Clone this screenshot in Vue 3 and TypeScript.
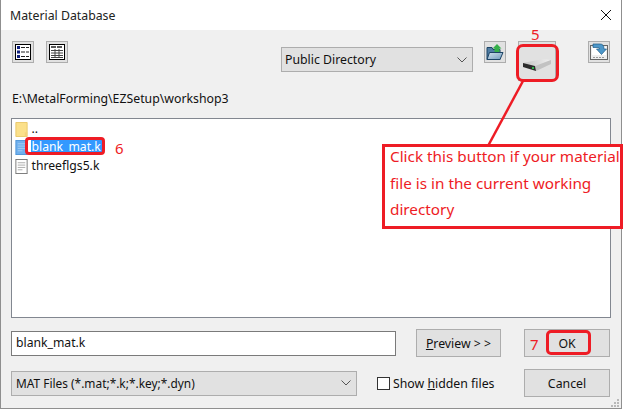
<template>
  <div class="dialog">
    <div class="titlebar">
      <span class="title">Material Database</span>
      <svg class="close" width="12" height="12" viewBox="0 0 12 12">
        <path d="M1 1 L11 11 M11 1 L1 11" stroke="#111" stroke-width="1" fill="none" />
      </svg>
    </div>

    <div class="body">
      <div class="toolbar">
        <div class="tool-btn">
          <svg width="16" height="16" viewBox="0 0 16 16">
            <rect x="0.500" y="0.500" width="15" height="15" fill="#fff" stroke="#000" />
            <rect x="2" y="2" width="3" height="3" fill="#10207e" />
            <rect x="2" y="6.500" width="3" height="3" fill="#10207e" />
            <rect x="2" y="11" width="3" height="3" fill="#10207e" />
            <path d="M6 3.500h8M6 8h8M6 12.500h8" stroke="#222" stroke-width="1" stroke-dasharray="4 1" />
          </svg>
        </div>
        <div class="tool-btn second">
          <svg width="16" height="16" viewBox="0 0 16 16">
            <rect x="0.500" y="0.500" width="15" height="15" fill="#fff" stroke="#000" />
            <path d="M2 3h12" stroke="#222" stroke-width="1.500" stroke-dasharray="5 1" />
            <path d="M2 6.500h12M2 9h12M2 11.500h12M2 13.500h12M6 5v9M10 5v9" stroke="#444" stroke-width="1" />
          </svg>
        </div>
        <div class="dir-select combo">
          <span>Public Directory</span>
          <svg class="chevron" width="10" height="6" viewBox="0 0 10 6">
            <path d="M0.500 0.500 L5 5 L9.500 0.500" stroke="#555" fill="none" />
          </svg>
        </div>
        <div class="tool-btn up-btn">
          <svg width="18" height="16" viewBox="0 0 18 16">
            <defs>
              <linearGradient id="folderFront" x1="0" y1="0" x2="1" y2="1">
                <stop offset="0" stop-color="#d5e3ee" />
                <stop offset="1" stop-color="#6f9abd" />
              </linearGradient>
            </defs>
            <path d="M1 3.500 H6 L7 5.500 H14 V15.500 H1 Z" fill="#4f7da3" stroke="#1d4466" />
            <path d="M3.500 8.500 H17 L14 15.500 H1 Z" fill="url(#folderFront)" stroke="#1d4466" />
            <path d="M11 0 L15.500 4.500 H13.500 V8 H8.500 V4.500 H6.500 Z" fill="#35b04a" />
          </svg>
        </div>
        <div class="drive-btn">
          <svg width="30" height="14" viewBox="0 0 30 14">
            <defs>
              <linearGradient id="driveTop" x1="0" y1="0" x2="1" y2="0">
                <stop offset="0" stop-color="#c4c4c4" />
                <stop offset="1" stop-color="#f0f0f0" />
              </linearGradient>
            </defs>
            <path d="M1 5 L21 1 L29 2 L13 8 Z" fill="url(#driveTop)" />
            <path d="M13 8 L29 2 L29 6 L14 13 Z" fill="#c2c2c2" />
            <path d="M1 5 L13 8 L14 13 L1 9 Z" fill="#2c2c2c" />
            <rect x="10" y="9" width="2" height="2" fill="#2fb64a" />
          </svg>
        </div>
        <div class="tool-btn save-btn">
          <svg width="18" height="18" viewBox="0 0 18 18">
            <rect x="0.500" y="2.500" width="17" height="14" fill="#eeeeee" stroke="#666" />
            <rect x="2" y="4" width="14" height="8" fill="#fff" />
            <path d="M3 14.500h12" stroke="#999" stroke-dasharray="2 1" />
            <path d="M3 1 H10 Q14 1 14 6 H16.500 L11.500 11.500 L6.500 6 H9.500 Q9.500 4.500 8 4.500 H3 Z" fill="#4d97c9" stroke="#1c5a85" stroke-width="0.700" />
          </svg>
        </div>
      </div>

      <div class="path">E:\MetalForming\EZSetup\workshop3</div>

      <div class="file-list">
        <div v-for="file in files" :key="file.name" class="file-row">
          <svg v-if="file.kind === 'folder'" class="file-icon" width="13" height="16" viewBox="0 0 13 16">
            <path d="M0.500 0.500 H12.500 V15.500 H0.500 Z" fill="#fbe08a" stroke="#e9c869" />
            <path d="M10 11 H12.500 V15.500 H10 Z" fill="#f4d27a" />
          </svg>
          <svg v-else class="file-icon" width="13" height="16" viewBox="0 0 13 16">
            <rect x="0.500" y="0.500" width="12" height="15" :fill="file.selected ? '#6fb0ee' : '#fff'" :stroke="file.selected ? '#4f95d8' : '#777'" />
            <path d="M2.500 4h8M2.500 6.500h8M2.500 9h8M2.500 11.500h5" :stroke="file.selected ? '#a5cdf2' : '#aaa'" />
          </svg>
          <span class="file-name" :class="{ selected: file.selected }">{{ file.name }}</span>
        </div>
      </div>

      <div class="row name-row">
        <div class="name-input">blank_mat.k</div>
        <div class="btn preview"><span><u>P</u>review &gt; &gt;</span></div>
        <div class="btn ok">OK</div>
      </div>

      <div class="row filter-row">
        <div class="filter-select combo">
          <span>MAT Files (*.mat;*.k;*.key;*.dyn)</span>
          <svg class="chevron" width="10" height="6" viewBox="0 0 10 6">
            <path d="M0.500 0.500 L5 5 L9.500 0.500" stroke="#555" fill="none" />
          </svg>
        </div>
        <label class="check">
          <span class="box"></span>
          <span>Show <u>h</u>idden files</span>
        </label>
        <div class="btn cancel">Cancel</div>
      </div>

      <svg class="grip" width="10" height="10" viewBox="0 0 10 10">
        <path d="M7 1h2v2h-2zM4 4h2v2h-2zM7 4h2v2h-2zM1 7h2v2h-2zM4 7h2v2h-2zM7 7h2v2h-2z" fill="#b9b9b9" />
      </svg>
    </div>

    <!-- red annotations lying over the dialog -->
    <div class="mark mark-drive"></div>
    <div class="mark mark-file"></div>
    <div class="mark mark-ok"></div>
    <span class="num num-5">5</span>
    <span class="num num-6">6</span>
    <span class="num num-7">7</span>
    <svg class="leader" width="50" height="70" viewBox="0 0 50 70">
      <path d="M37 1 L2 66" stroke="#ee1c25" stroke-width="2.500" fill="none" />
    </svg>
    <div class="callout">
      <div class="callout-text">Click this button if your material file is in the current working directory</div>
    </div>
  </div>
</template>

<script setup lang="ts">
interface FileItem {
  name: string
  kind: 'folder' | 'file'
  selected?: boolean
}

const files: FileItem[] = [
  { name: '..', kind: 'folder' },
  { name: 'blank_mat.k', kind: 'file', selected: true },
  { name: 'threeflgs5.k', kind: 'file' }
]
</script>

<style>
html, body {
  background: #fff;
  overflow: hidden;
}
</style>

<style scoped>
.dialog {
  position: relative;
  box-sizing: border-box;
  width: 622px;
  height: 409px;
  display: flex;
  flex-direction: column;
  border: 1px solid #8f8f8f;
  border-top: none;
  font-family: "Noto Sans", "Open Sans", sans-serif;
  font-size: 12.300px;
  color: #111;
}

.titlebar {
  height: 30px;
  flex: none;
  background: #fff;
  display: flex;
  align-items: center;
  justify-content: space-between;
  padding: 0 9px 0 9px;
}

.title {
  font-size: 12.300px;
  color: #222;
}

.body {
  position: relative;
  flex: 1;
  background: #f0f0f0;
  padding: 0 9px;
}

.toolbar {
  display: flex;
  align-items: flex-start;
  height: 58px;
  padding-top: 11px;
  box-sizing: border-box;
}

.tool-btn {
  width: 22px;
  height: 22px;
  box-sizing: border-box;
  border: 1px solid #adadad;
  background: #e1e1e1;
  display: flex;
  align-items: center;
  justify-content: center;
  flex: none;
  margin-left: 2px;
}

.tool-btn.second {
  margin-left: 12px;
}

.combo {
  box-sizing: border-box;
  border: 1px solid #adadad;
  background: #e1e1e1;
  display: flex;
  align-items: center;
  justify-content: space-between;
  padding: 0 4px 0 3px;
  flex: none;
}

.dir-select {
  width: 192px;
  height: 25px;
  margin: 6px 0 0 213px;
}

.chevron {
  margin-right: 1px;
}

.tool-btn.up-btn {
  margin-left: 11px;
}

.drive-btn {
  box-sizing: border-box;
  width: 38px;
  height: 40px;
  margin-left: 12px;
  border: 1px solid #adadad;
  background: #e1e1e1;
  display: flex;
  align-items: center;
  justify-content: center;
  flex: none;
  padding-top: 8px;
}

.tool-btn.save-btn {
  margin-left: 32px;
}

.path {
  height: 30px;
  line-height: 22px;
  margin-left: 2px;
}

.file-list {
  box-sizing: border-box;
  height: 200px;
  margin-left: 1px;
  width: 600px;
  background: #fff;
  border: 1px solid #828790;
  padding: 1px 2px;
}

.file-row {
  display: flex;
  align-items: center;
  height: 18.500px;
  gap: 3px;
  padding-left: 1px;
}

.file-icon {
  flex: none;
  height: 15px;
}

.file-name {
  padding: 0 1px;
  line-height: 15px;
  font-size: 12.200px;
  position: relative;
  top: -1px;
  left: -0.500px;
}

.file-name.selected {
  background: #3399ff;
  color: #fff;
}

.row {
  display: flex;
  align-items: center;
  margin-left: 1px;
}

.name-row {
  margin-top: 11px;
  height: 28px;
}

.name-input {
  box-sizing: border-box;
  width: 385px;
  height: 25px;
  background: #fff;
  border: 1px solid #7a7a7a;
  line-height: 22px;
  padding-left: 4px;
  font-size: 12.200px;
}

.btn {
  box-sizing: border-box;
  height: 28px;
  border: 1px solid #adadad;
  background: #e1e1e1;
  display: flex;
  align-items: center;
  justify-content: center;
  flex: none;
  font-size: 12.300px;
}

.preview {
  width: 85px;
  margin-left: 20px;
}

.ok {
  width: 86px;
  margin-left: 23px;
}

.filter-row {
  margin-top: 12px;
  height: 28px;
}

.filter-select {
  width: 346px;
  height: 25px;
  font-size: 11.900px;
  padding-left: 4px;
}

.check {
  display: flex;
  align-items: center;
  gap: 3px;
  margin-left: 20px;
  width: 147px;
  flex: none;
  font-size: 12.300px;
}

.box {
  box-sizing: border-box;
  width: 13px;
  height: 13px;
  background: #fff;
  border: 1px solid #333;
  flex: none;
}

.cancel {
  width: 86px;
}

.grip {
  position: absolute;
  right: 1px;
  bottom: 0;
}

.mark {
  position: absolute;
  box-sizing: border-box;
  border: 3px solid #ee1c25;
}

.mark-drive {
  left: 515px;
  top: 44px;
  width: 43px;
  height: 38px;
  border-radius: 7px;
}

.mark-file {
  left: 24px;
  top: 137px;
  width: 80px;
  height: 18px;
  border-radius: 4px;
}

.mark-ok {
  left: 545px;
  top: 330px;
  width: 45px;
  height: 25px;
  border-radius: 5px;
}

.num {
  position: absolute;
  color: #ee1c25;
  font-family: "Noto Sans", sans-serif;
  font-size: 15px;
  line-height: 18px;
}

.num-5 {
  left: 530px;
  top: 25px;
}

.num-6 {
  left: 114px;
  top: 139px;
}

.num-7 {
  left: 529px;
  top: 335px;
}

.leader {
  position: absolute;
  left: 485px;
  top: 80px;
}

.callout {
  position: absolute;
  left: 381px;
  top: 144px;
  box-sizing: border-box;
  width: 241px;
  height: 85px;
  border: 3px solid #ee1c25;
  background: #fff;
  color: #ee1c25;
  font-size: 15.300px;
  line-height: 26.500px;
  padding: 0 0 0 5px;
}

.callout-text {
  margin-top: -4px;
}
</style>
